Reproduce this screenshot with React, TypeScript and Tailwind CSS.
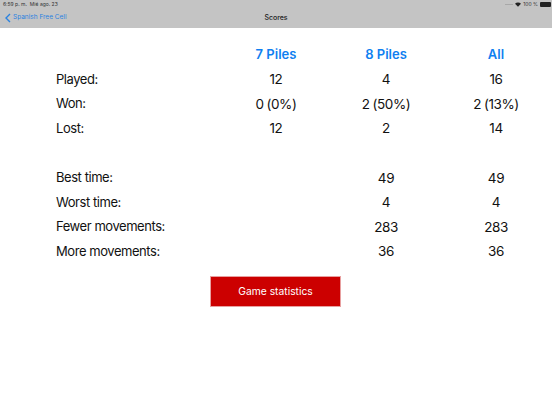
import React from 'react';

const rows = [
  { label: "Played:", values: ["12", "4", "16"] },
  { label: "Won:", values: ["0 (0%)", "2 (50%)", "2 (13%)"] },
  { label: "Lost:", values: ["12", "2", "14"] },
  null,
  { label: "Best time:", values: ["", "49", "49"] },
  { label: "Worst time:", values: ["", "4", "4"] },
  { label: "Fewer movements:", values: ["", "283", "283"] },
  { label: "More movements:", values: ["", "36", "36"] },
];

const gridCols = "grid grid-cols-[165px_110px_110px_110px] items-center";

export default function App() {
  return (
    <div className="w-[552px] h-[414px] bg-white overflow-hidden font-['Inter','Liberation_Sans',sans-serif] text-[#111]">
      <div className="h-[28px] bg-[#c4c4c4] flex flex-col">
        <div className="h-[9px] pl-[3px] pr-[1px] flex items-center justify-between text-[5px] text-[#333]">
          <div className="flex gap-[3px]">
            <span>6:59 p. m.</span>
            <span>Mié ago. 23</span>
          </div>
          <div className="flex items-center gap-[2px]">
            <div className="w-[8px] h-[1px] bg-[#a8a8a8]" />
            <svg width="6" height="5" viewBox="0 0 8 6">
              <path d="M0 2 A5.5 5.5 0 0 1 8 2 L4 6 Z" fill="#222" />
            </svg>
            <span>100 %</span>
            <div className="w-[11px] h-[5px] bg-[#222] rounded-[1px]" />
          </div>
        </div>
        <div className="relative flex-1 flex items-center justify-center">
          <div className="absolute left-[5px] top-[4px] flex items-center gap-[2px] text-[#2a82e0] text-[6.5px]">
            <svg width="6" height="10" viewBox="0 0 6 10" fill="none">
              <path d="M5 1 L1 5 L5 9" stroke="#2a82e0" strokeWidth="1.4" />
            </svg>
            <span>Spanish Free Cell</span>
          </div>
          <span className="text-[7px] font-medium text-[#222] mb-[1px]">Scores</span>
        </div>
      </div>

      <div className="ml-[56px] mt-[15px]">
        <div className={`${gridCols} h-[24px] text-[13px] font-semibold text-[#0f7ff0]`}>
          <span />
          <span className="text-center">7 Piles</span>
          <span className="text-center">8 Piles</span>
          <span className="text-center">All</span>
        </div>
        {rows.map((row, i) =>
          row ? (
            <div key={i} className={`${gridCols} h-[24.6px] text-[13px] tracking-[-0.034em]`}>
              <span>{row.label}</span>
              {row.values.map((v, j) => (
                <span key={j} className="text-center text-[13.5px] tracking-[-0.03em] [word-spacing:-0.5px]">{v}</span>
              ))}
            </div>
          ) : (
            <div key={i} className="h-[24.6px]" />
          )
        )}
      </div>

      <div className="flex justify-center mt-[12px] pr-[1px]">
        <button className="w-[131px] h-[31px] bg-[#cc0000] border border-[#e8a0a0] text-white text-[10.3px]">
          Game statistics
        </button>
      </div>
    </div>
  );
}
